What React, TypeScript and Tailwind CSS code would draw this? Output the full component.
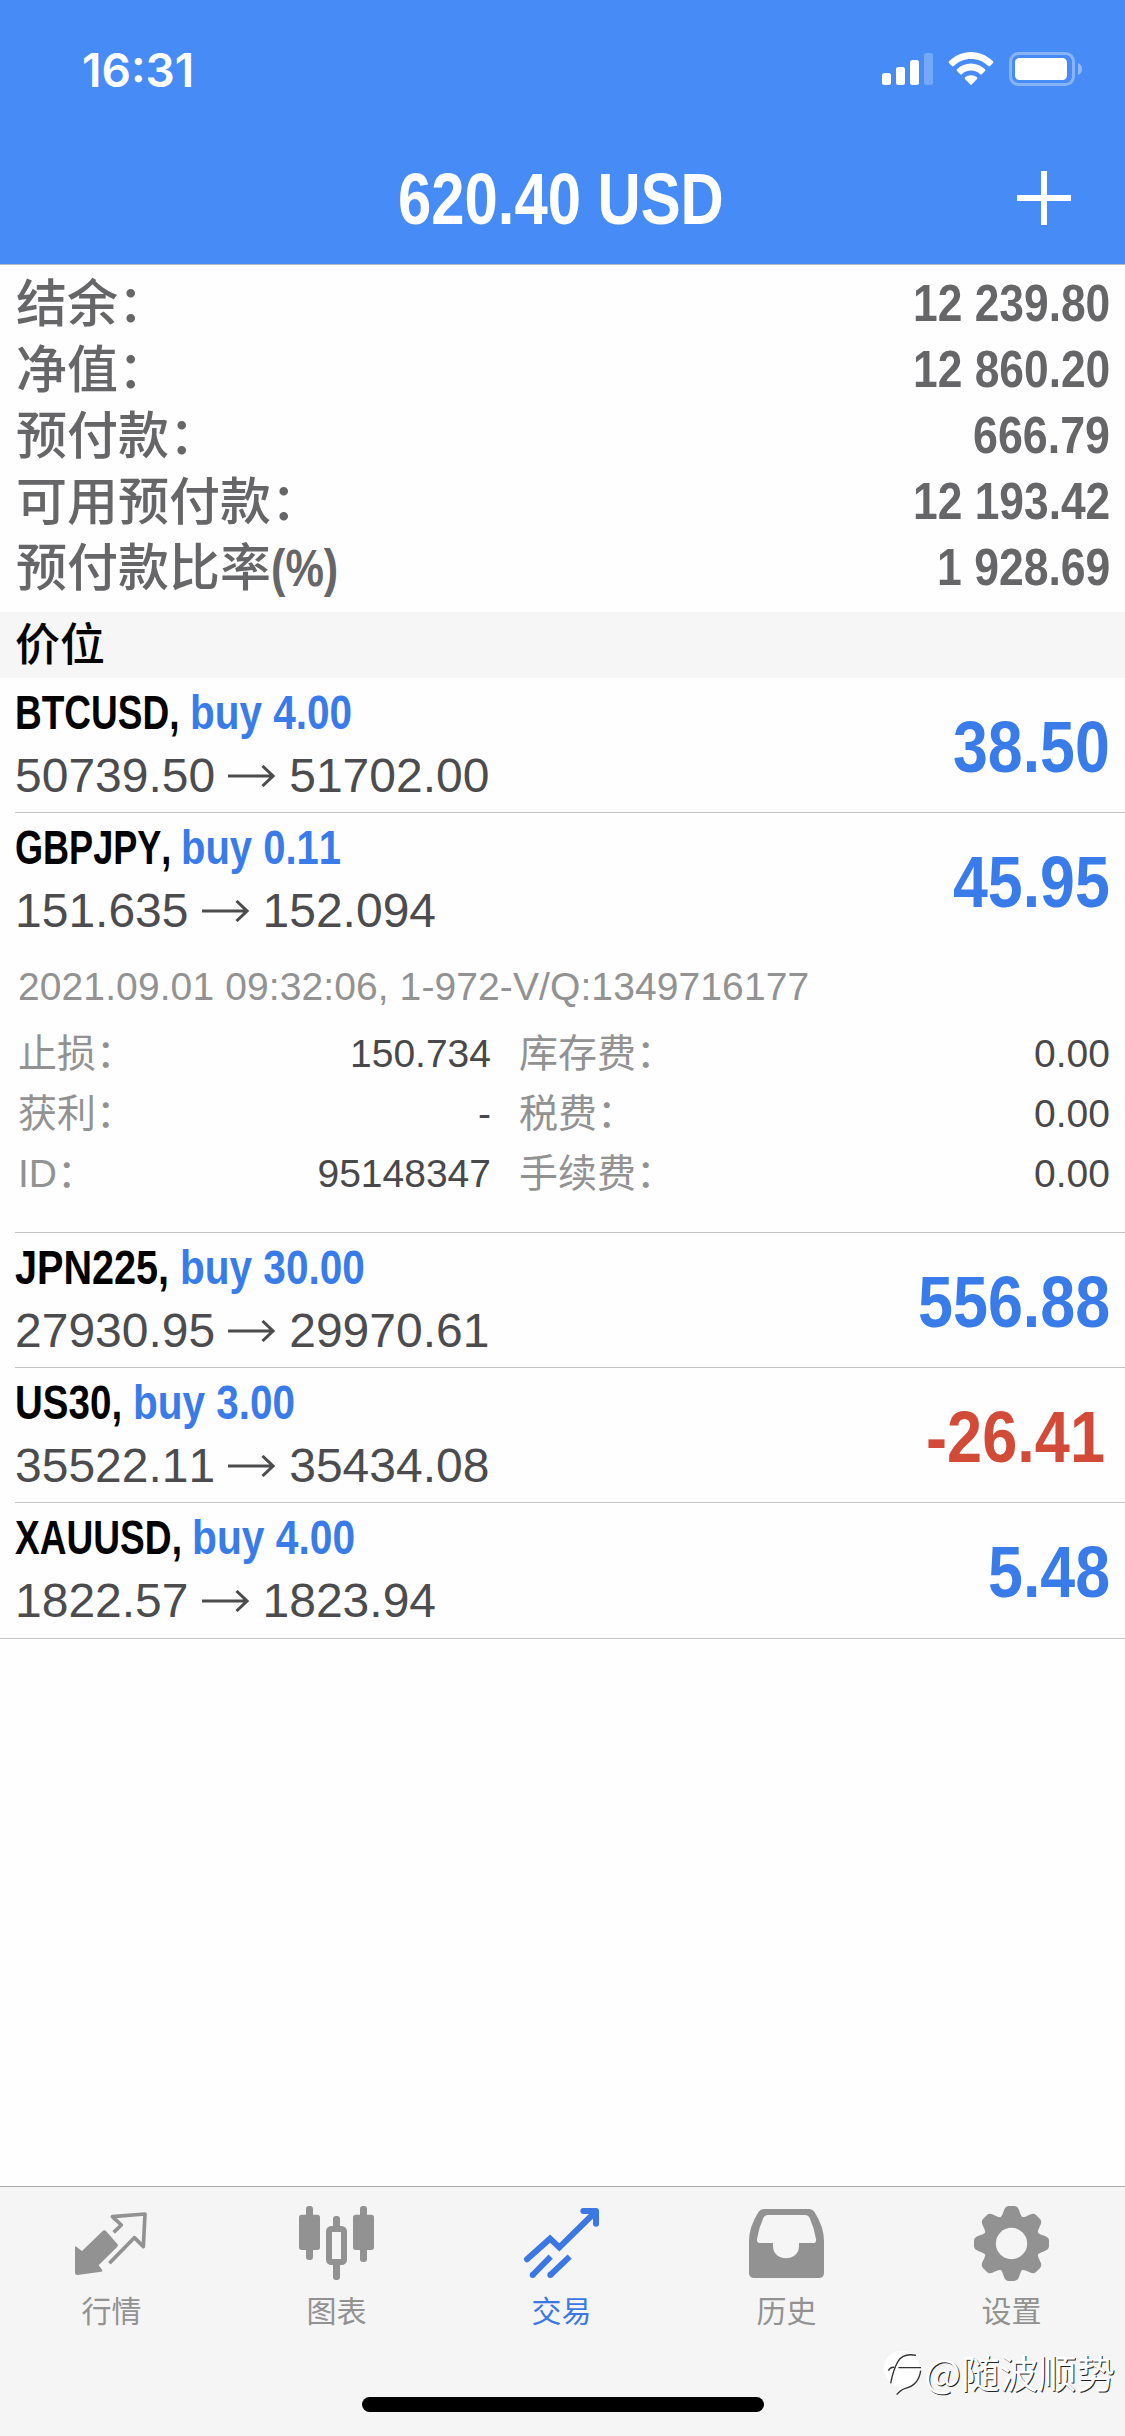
import React, { useLayoutEffect, useRef } from 'react';

interface Position {
  symbol: string;
  symbolWidth: number;
  side: string;
  sideWidth: number;
  open: string;
  current: string;
  profit: string;
  profitWidth: number;
  details?: boolean;
}

const account = [
  { label: '结余：', value: '12 239.80', width: 197 },
  { label: '净值：', value: '12 860.20', width: 197 },
  { label: '预付款：', value: '666.79', width: 137 },
  { label: '可用预付款：', value: '12 193.42', width: 197 },
  { label: '预付款比率', suffix: '(%)', value: '1 928.69', width: 173 },
];

const positions: Position[] = [
  { symbol: 'BTCUSD, ', symbolWidth: 175, side: 'buy 4.00', sideWidth: 162, open: '50739.50', current: '51702.00', profit: '38.50', profitWidth: 157 },
  { symbol: 'GBPJPY, ', symbolWidth: 166, side: 'buy 0.11', sideWidth: 160, open: '151.635', current: '152.094', profit: '45.95', profitWidth: 157, details: true },
  { symbol: 'JPN225, ', symbolWidth: 165, side: 'buy 30.00', sideWidth: 185, open: '27930.95', current: '29970.61', profit: '556.88', profitWidth: 192 },
  { symbol: 'US30, ', symbolWidth: 118, side: 'buy 3.00', sideWidth: 162, open: '35522.11', current: '35434.08', profit: '-26.41', profitWidth: 183 },
  { symbol: 'XAUUSD, ', symbolWidth: 177, side: 'buy 4.00', sideWidth: 163, open: '1822.57', current: '1823.94', profit: '5.48', profitWidth: 122 },
];

const details = [
  ['止损：', '150.734', '库存费：', '0.00'],
  ['获利：', '-', '税费：', '0.00'],
  ['ID：', '95148347', '手续费：', '0.00'],
];

// Condensed text: squeezes its content horizontally to the given width
function Condensed({ width, children }: { width: number; children: React.ReactNode }) {
  const ref = useRef<HTMLSpanElement>(null);

  useLayoutEffect(() => {
    const el = ref.current;
    if (el) el.style.transform = `scaleX(${width / el.offsetWidth})`;
  }, [width, children]);

  return (
    <span className="inline-flex" style={{ width }}>
      <span ref={ref} className="inline-block shrink-0 origin-left whitespace-pre font-bold">
        {children}
      </span>
    </span>
  );
}

function StatusBar() {
  return (
    <div className="flex h-[132px] items-start justify-between pl-[82px] pr-[43px] pt-[43px]">
      <span className="font-['Inter',sans-serif] text-[46px] font-semibold leading-[54px]">16:31</span>
      <div className="flex gap-[15px] pt-[9px]">
        <svg width="51" height="34" viewBox="0 0 51 34" fill="white">
          <rect x="0" y="21" width="9" height="12" rx="2.5" />
          <rect x="14" y="15" width="9" height="18" rx="2.5" />
          <rect x="28" y="8" width="9" height="25" rx="2.5" />
          <rect x="42" y="1" width="9" height="32" rx="2.5" opacity="0.25" />
        </svg>
        <svg width="46" height="34" viewBox="0 0 46 34" fill="white">
          <path d="M1 9.3C7 3.5 14.500 0 23 0s16 3.500 22 9.300c.5.500.5 1.200 0 1.700l-3 3c-.5.500-1.200.5-1.700 0C35.500 9.400 29.600 6.900 23 6.900S10.500 9.400 5.700 14c-.5.500-1.200.5-1.700 0l-3-3c-.5-.5-.5-1.200 0-1.700z" />
          <path d="M9 17.300c3.800-3.500 8.600-5.700 14-5.700s10.200 2.200 14 5.700c.5.500.5 1.200 0 1.700l-3.200 3.200c-.5.500-1.100.5-1.600 0-2.500-2.200-5.700-3.600-9.200-3.600s-6.700 1.400-9.200 3.600c-.5.500-1.100.5-1.600 0L9 19c-.5-.5-.5-1.200 0-1.700z" />
          <path d="M17 25.300c1.600-1.300 3.700-2.100 6-2.100s4.400.8 6 2.100c.5.500.5 1.100 0 1.600l-5.300 5.600c-.4.500-1 .5-1.400 0L17 26.900c-.5-.5-.5-1.100 0-1.600z" />
        </svg>
        <svg width="73" height="34" viewBox="0 0 73 34" fill="white">
          <rect x="1.500" y="1.500" width="63" height="31" rx="8" fill="none" stroke="white" strokeWidth="3" opacity="0.35" />
          <rect x="6" y="6" width="52" height="22" rx="4.500" />
          <path d="M69 11c2.500 1 4 3.300 4 6s-1.500 5-4 6z" opacity="0.4" />
        </svg>
      </div>
    </div>
  );
}

function Header() {
  return (
    <header className="h-[264px] bg-[#478bf6] text-white">
      <StatusBar />
      <div className="grid h-[132px] grid-cols-[1fr_auto_1fr] items-center pl-[51px] pr-[54px]">
        <span />
        <h1 className="pt-[2px] text-[73px] leading-[130px]">
          <Condensed width={326}>620.40 USD</Condensed>
        </h1>
        <svg className="justify-self-end" width="54" height="54" viewBox="0 0 54 54" stroke="white" strokeWidth="6">
          <path d="M27 0v54M0 27h54" />
        </svg>
      </div>
    </header>
  );
}

function AccountSummary() {
  return (
    <section className="h-[348px] border-t border-[#b4bccb] pl-[16px] pr-[15px] pt-[5px] text-[#666668]">
      {account.map((row) => (
        <div key={row.label} className="flex h-[66px] justify-between leading-[66px]">
          <span className="flex pt-[2px] text-[51px] font-medium">
            {row.label}
            {row.suffix && <Condensed width={67}>{row.suffix}</Condensed>}
          </span>
          <span className="text-[52px]">
            <Condensed width={row.width}>{row.value}</Condensed>
          </span>
        </div>
      ))}
    </section>
  );
}

function PositionDetails() {
  return (
    <div className="h-[285px] pl-[3px] pr-[15px] pt-[10px] text-[39px] leading-[60px] text-[#929292]">
      <p className="tracking-[0.1px]">2021.09.01 09:32:06, 1-972-V/Q:1349716177</p>
      <div className="mt-[7px]">
        {details.map(([leftLabel, leftValue, rightLabel, rightValue]) => (
          <div key={leftLabel} className="grid h-[60px] grid-cols-[473px_1fr] gap-x-[28px]">
            <div className="flex justify-between">
              <span>{leftLabel}</span>
              <span className="text-[#48484a]">{leftValue}</span>
            </div>
            <div className="flex justify-between">
              <span>{rightLabel}</span>
              <span className="text-[#48484a]">{rightValue}</span>
            </div>
          </div>
        ))}
      </div>
    </div>
  );
}

function PositionRow({ position }: { position: Position }) {
  const loss = position.profit.startsWith('-');

  return (
    <li className="pl-[15px] last:border-b last:border-[#c4c4c6] last:pb-px [&:last-child>div]:border-b-0">
      <div className="border-b border-[#c4c4c6]">
        <div className="flex h-[134px] justify-between pr-[15px]">
          <div className="pt-[4px] text-[48px] leading-[62px]">
            <div className="flex h-[62px]">
              <Condensed width={position.symbolWidth}>{position.symbol}</Condensed>
              <span className="text-[#3a7bea]">
                <Condensed width={position.sideWidth}>{position.side}</Condensed>
              </span>
            </div>
            <div className="flex h-[62px] items-center pt-px text-[#4c4c4e]">
              <span>{position.open}</span>
              <svg className="ml-[13px] mr-[14px]" width="47" height="22" viewBox="0 0 47 22" fill="none" stroke="currentColor" strokeWidth="3">
                <path d="M0 11h45M34.500 1l10.500 10-10.500 10" />
              </svg>
              <span>{position.current}</span>
            </div>
          </div>
          <div
            className={
              loss
                ? 'pr-[5px] pt-[2px] text-[73px] leading-[134px] text-[#d24b38]'
                : 'pt-[2px] text-[73px] leading-[134px] text-[#3a7bea]'
            }
          >
            <Condensed width={loss ? position.profitWidth - 4 : position.profitWidth}>{position.profit}</Condensed>
          </div>
        </div>
        {position.details && <PositionDetails />}
      </div>
    </li>
  );
}

function QuotesIcon() {
  return (
    <svg className="overflow-visible" width="75" height="75" viewBox="225 108 225 225">
      <path d="M229 230q-4-3-4 2v76q0 7 7 7l72-10q6-2 2-6l-10-13 56-56q4-4 0-8l-34-39q-5-5-10 0l-62 60z" fill="currentColor" />
      <path d="M341 187l23-22-27-25 98-8-5 98-27-27-75 77" fill="none" stroke="currentColor" strokeWidth="11" strokeLinejoin="round" />
    </svg>
  );
}

function ChartIcon() {
  return (
    <svg className="overflow-visible" width="75" height="75" viewBox="900 108 225 225" fill="currentColor">
      <rect x="918" y="108" width="21" height="162" rx="9" />
      <rect x="897" y="134" width="63" height="106" rx="8" />
      <rect x="1080" y="108" width="21" height="168" rx="9" />
      <rect x="1059" y="134" width="63" height="106" rx="8" />
      <rect x="999" y="138" width="21" height="40" rx="9" />
      <rect x="999" y="275" width="21" height="55" rx="9" />
      <rect x="987" y="177" width="45" height="99" rx="7" fill="none" stroke="currentColor" strokeWidth="18" />
    </svg>
  );
}

function TradeIcon() {
  return (
    <svg className="overflow-visible" width="75" height="75" viewBox="315 108 225 225" fill="none" stroke="currentColor" strokeWidth="18">
      <path d="M321 268l69-62 28 26 108-106" strokeLinecap="round" />
      <path d="M490 123h38v38" strokeLinecap="round" strokeLinejoin="round" />
      <path d="M508 124h20v20z" fill="currentColor" stroke="none" />
      <path d="M338 315l54-55M391 315l58-55" />
      <circle cx="338" cy="315" r="9" fill="currentColor" stroke="none" />
      <circle cx="391" cy="315" r="9" fill="currentColor" stroke="none" />
    </svg>
  );
}

function HistoryIcon() {
  return (
    <svg className="overflow-visible" width="75" height="75" viewBox="990 108 225 225">
      <path
        d="M1032 117h136q10 0 15 8 29 45 29 88v95q0 16-16 16h-193q-16 0-16-16v-95q0-43 29-88 5-8 16-8zM1044 135q-10 0-14 9-13 28-19 63-1 12 8 12h40v10c0 48 78 48 78 0v-10h42q11 0 9-12-6-35-19-63-4-9-14-9z"
        fill="currentColor"
        fillRule="evenodd"
      />
    </svg>
  );
}

function SettingsIcon() {
  return (
    <svg className="overflow-visible" width="75" height="75" viewBox="405 108 225 225">
      <g fill="currentColor">
        {[0, 45, 90, 135, 180, 225, 270, 315].map((angle) => (
          <path
            key={angle}
            transform={`rotate(${angle} 514.5 220.500)`}
            d="M472 150q14-8 18-24 5-18 16-18h17q11 0 16 18 4 16 18 24v30h-85z"
          />
        ))}
        <circle cx="514.500" cy="220.500" r="84" />
      </g>
      <circle cx="514.500" cy="220.500" r="47" fill="#f5f5f5" />
    </svg>
  );
}

const tabs = [
  { label: '行情', icon: QuotesIcon },
  { label: '图表', icon: ChartIcon },
  { label: '交易', icon: TradeIcon, active: true },
  { label: '历史', icon: HistoryIcon },
  { label: '设置', icon: SettingsIcon },
];

function TabBar() {
  return (
    <nav className="flex h-[250px] flex-col items-center justify-between border-t border-[#adadad] bg-[#f5f5f5] pb-[24px]">
      <div className="grid w-full grid-cols-5">
        {tabs.map(({ label, icon: Icon, active }) => (
          <div
            key={label}
            className={active ? 'flex flex-col items-center pt-[19px] text-[#3c78e4]' : 'flex flex-col items-center pt-[19px] text-[#929292]'}
          >
            <Icon />
            <span className="mt-[10px] pr-[2px] text-[30px] leading-[42px]">{label}</span>
          </div>
        ))}
      </div>
      <div className="h-[15px] w-[402px] rounded-full bg-black" />
    </nav>
  );
}

function Watermark() {
  return (
    <div className="absolute bottom-[38px] right-[10px] flex items-center text-white">
      <svg className="mt-[4px]" width="40" height="46" viewBox="110 550 120 138">
        <circle cx="166" cy="606" r="54" fill="white" />
        <path d="M222 606q-4 48-50 60l-22 18 10-22" fill="white" />
        <path d="M126 612q6-12 18-10M133 650q8-42 22-66 16-26 54-18M156 603h68M223 612q-6 44-46 53-14 4-26 19" fill="none" stroke="#333" strokeWidth="4" />
      </svg>
      <span className="ml-[2px] font-['Noto_Sans_CJK_SC',sans-serif] text-[38.5px] leading-[54px] [text-shadow:1px_1px_0_#222]">
        @随波顺势
      </span>
    </div>
  );
}

export default function App() {
  return (
    <div className="relative flex h-[2436px] w-[1125px] flex-col overflow-hidden bg-[#fefefe] font-['Liberation_Sans','Noto_Sans_CJK_SC',sans-serif] text-black [font-kerning:none]">
      <Header />
      <AccountSummary />
      <h2 className="h-[66px] bg-[#f6f6f6] pl-[15px] pt-[2px] text-[45px] font-medium leading-[64px]">价位</h2>
      <ul className="flex-1">
        {positions.map((position) => (
          <PositionRow key={position.symbol} position={position} />
        ))}
      </ul>
      <TabBar />
      <Watermark />
    </div>
  );
}
